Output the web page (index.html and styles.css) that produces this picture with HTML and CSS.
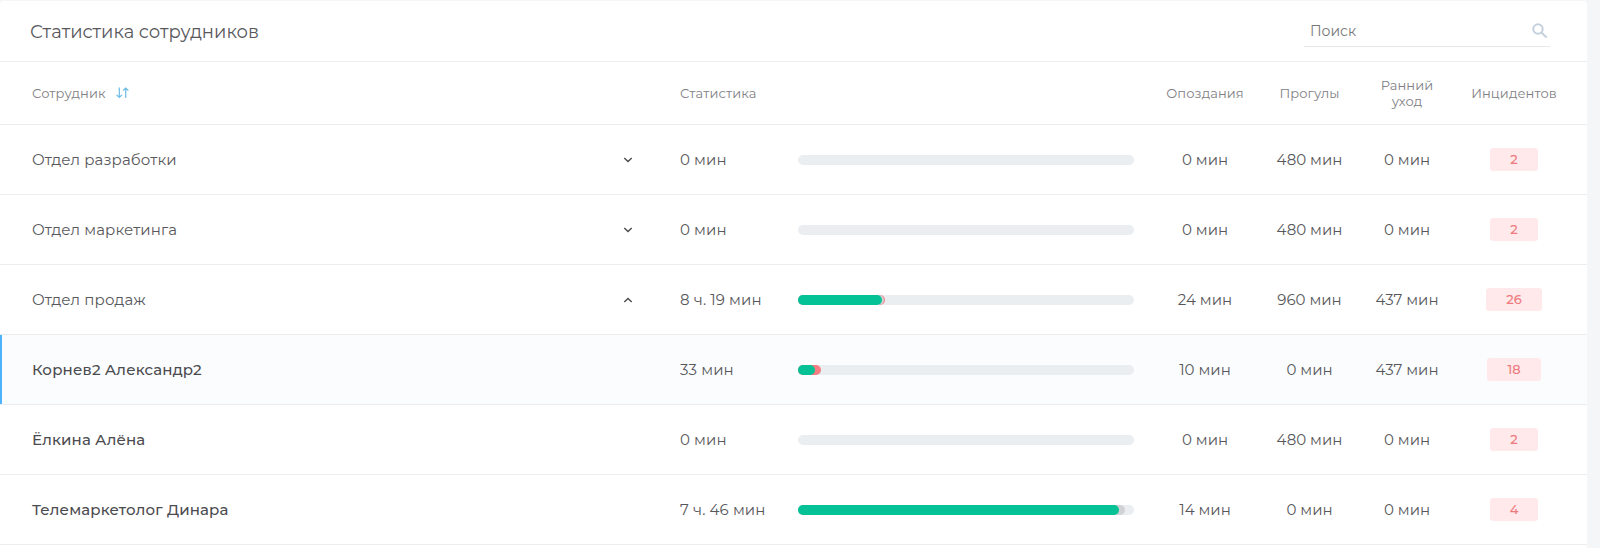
FILE: index.html
```
<!doctype html>
<html lang="ru">
<head>
	<meta charset="UTF-8">
	<title>Статистика сотрудников</title>
	<link rel="stylesheet" href="styles.css">
</head>
<body>
	<section class="card">
		<header class="card-header">
			<h1>Статистика сотрудников</h1>
			<label class="search">
				<input type="text" placeholder="Поиск">
				<svg width="16" height="16" viewBox="0 0 16 16"><circle cx="6" cy="6" r="4.7"/><path d="M9.5 9.5L14.6 14.6"/></svg>
			</label>
		</header>

		<div class="row head">
			<div class="name">Сотрудник
				<svg class="sort" width="13" height="12" viewBox="0 0 13 12"><path d="M3.3 .5V10.5M.6 7.8L3.3 10.5L6 7.8M9.7 11V1M7 3.7L9.7 1L12.4 3.7"/></svg>
			</div>
			<div class="stat">Статистика</div>
			<div></div>
			<div class="num">Опоздания</div>
			<div class="num">Прогулы</div>
			<div class="num">Ранний<br>уход</div>
			<div class="num">Инцидентов</div>
		</div>

		<div class="row">
			<div class="name">Отдел разработки <svg class="arrow" width="10" height="6" viewBox="0 0 10 6"><path d="M1.3 1L5 4.5L8.7 1"/></svg></div>
			<div class="stat">0 мин</div>
			<div class="bar"></div>
			<div class="num">0 мин</div>
			<div class="num">480 мин</div>
			<div class="num">0 мин</div>
			<div class="num"><span class="badge">2</span></div>
		</div>

		<div class="row">
			<div class="name">Отдел маркетинга <svg class="arrow" width="10" height="6" viewBox="0 0 10 6"><path d="M1.3 1L5 4.5L8.7 1"/></svg></div>
			<div class="stat">0 мин</div>
			<div class="bar"></div>
			<div class="num">0 мин</div>
			<div class="num">480 мин</div>
			<div class="num">0 мин</div>
			<div class="num"><span class="badge">2</span></div>
		</div>

		<div class="row">
			<div class="name">Отдел продаж <svg class="arrow up" width="10" height="6" viewBox="0 0 10 6"><path d="M1.3 1L5 4.5L8.7 1"/></svg></div>
			<div class="stat">8 ч. 19 мин</div>
			<div class="bar">
				<i class="red" style="width: 26%"></i>
				<i class="grey" style="width: 25.6%"></i>
				<i class="green" style="width: 25%"></i>
			</div>
			<div class="num">24 мин</div>
			<div class="num">960 мин</div>
			<div class="num">437 мин</div>
			<div class="num"><span class="badge">26</span></div>
		</div>

		<div class="row person active">
			<div class="name">Корнев2 Александр2</div>
			<div class="stat">33 мин</div>
			<div class="bar">
				<i class="red" style="width: 6.9%"></i>
				<i class="green" style="width: 5.1%"></i>
			</div>
			<div class="num">10 мин</div>
			<div class="num">0 мин</div>
			<div class="num">437 мин</div>
			<div class="num"><span class="badge">18</span></div>
		</div>

		<div class="row person">
			<div class="name">Ёлкина Алёна</div>
			<div class="stat">0 мин</div>
			<div class="bar"></div>
			<div class="num">0 мин</div>
			<div class="num">480 мин</div>
			<div class="num">0 мин</div>
			<div class="num"><span class="badge">2</span></div>
		</div>

		<div class="row person">
			<div class="name">Телемаркетолог Динара</div>
			<div class="stat">7 ч. 46 мин</div>
			<div class="bar">
				<i class="grey" style="width: 97.4%"></i>
				<i class="green" style="width: 95.6%"></i>
			</div>
			<div class="num">14 мин</div>
			<div class="num">0 мин</div>
			<div class="num">0 мин</div>
			<div class="num"><span class="badge">4</span></div>
		</div>
	</section>
</body>
</html>
```
FILE: styles.css
```
html, body {height: 100%; margin: 0; overflow: hidden;}
body {
	background: #f4f6f8;
	color: #58585c;
	font-family: Montserrat, Inter, "Open Sans", sans-serif;
	font-size: 15px; font-weight: 400;
}
svg {fill: none; flex: none;}

.card {
	width: 1587px; height: 100%;
	margin-top: 1px;
	background: white;
	border-radius: 4px 4px 0 0;
}
.card-header {
	display: flex; align-items: center; justify-content: space-between;
	box-sizing: border-box;
	height: 61px;
	padding: 0 37px 0 30px;
	border-bottom: 1px solid #ebedef;
}
h1 {
	margin: 2px 0 0;
	font-size: 18px; font-weight: 400;
}
.search {
	display: flex; align-items: center;
	box-sizing: border-box;
	width: 246px; height: 31px;
	padding: 0 2px 0 6px;
	border-bottom: 1px solid #e4e8ea;
}
.search input {
	flex: 1; min-width: 0;
	padding: 0;
	border: 0; outline: 0;
	background: none;
	font: inherit; font-size: 14px;
}
.search input::placeholder {color: #77777b; opacity: 1;}
.search svg {stroke: #c4d0dd; stroke-width: 2;}

.row {
	display: grid; align-items: center;
	grid-template-columns: 648px 118px 352px 110px 99px 96px 118px;
	box-sizing: border-box;
	height: 70px;
	padding-left: 32px;
	border-bottom: 1px solid #ebedef;
	line-height: 20px;
}
.row.head {
	height: 63px;
	color: #818185;
	font-size: 13px; line-height: 16px;
	letter-spacing: .1px;
}
.name, .stat {letter-spacing: .13px;}
.name {
	display: flex; align-items: center; justify-content: space-between;
	padding-right: 47px;
}
.head .name {justify-content: flex-start; gap: 10px;}
.sort {stroke: #6dbbe6; stroke-width: 1.2;}
.arrow {stroke: #4b4b4f; stroke-width: 1.4;}
.arrow.up {transform: scaleY(-1);}
.num {text-align: center;}

.person .name {color: #4b4b4f; font-weight: 500; letter-spacing: .15px;}
.active {
	background: #fafcfe;
	box-shadow: inset 2px 0 #4db3fa;
}

/* bar layers share one cell, the shortest is on top */
.bar {
	display: grid;
	height: 10px;
	margin-right: 16px;
	border-radius: 5px;
	background: #eaeef1;
}
.bar i {
	grid-area: 1 / 1;
	border-radius: 5px;
}
.red {background: #f67e83;}
.grey {background: #cfd2d4;}
.green {background: #04c296;}

.badge {
	display: inline-block;
	padding: 0 20px;
	border-radius: 3px;
	background: #ffe9ea;
	color: #ee7a80;
	font-size: 13px; line-height: 23px; font-weight: 500;
}
```
